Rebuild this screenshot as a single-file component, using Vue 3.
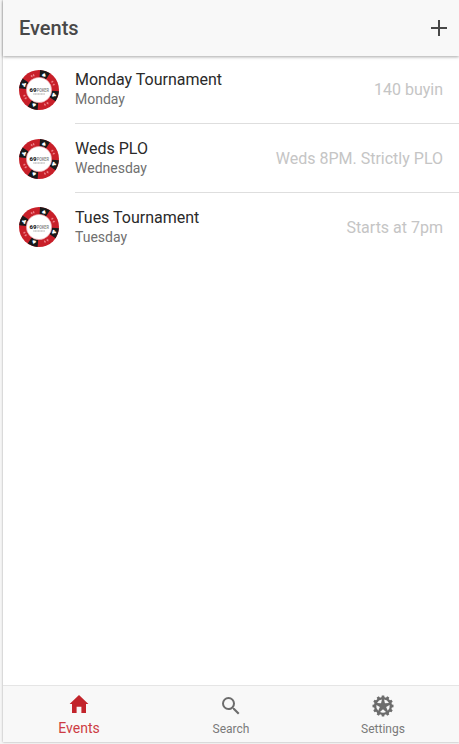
<script setup>
const events = [
  { name: 'Monday Tournament', day: 'Monday', note: '140 buyin' },
  { name: 'Weds PLO', day: 'Wednesday', note: 'Weds 8PM. Strictly PLO' },
  { name: 'Tues Tournament', day: 'Tuesday', note: 'Starts at 7pm' },
]
const suits = [
  { angle: 18, glyph: '♠' },
  { angle: 109, glyph: '♣' },
  { angle: 199, glyph: '♠' },
  { angle: 290, glyph: '♣' },
]
const pips = [-28, -20, 58, 70, 147, 158, 238, 249]
const teeth = Array.from({ length: 12 }, (_, i) => i * 30)
const holes = [36, 108, 180, 252, 324]
</script>

<template>
  <div class="screen">
    <div class="page">
      <header class="toolbar">
        <h1>Events</h1>
        <svg class="add" viewBox="0 0 16 16"><path d="M8 0v16M0 8h16" /></svg>
      </header>

      <main class="list">
        <article v-for="event in events" :key="event.name" class="item">
          <svg class="chip" viewBox="0 0 40 40">
            <circle cx="20" cy="20" r="20" fill="#c81f29" />
            <g v-for="suit in suits" :key="suit.angle" :transform="`rotate(${suit.angle} 20 20)`">
              <path d="M14.8.7a20 20 0 0 1 10.4 0L23.4 7.6a13 13 0 0 0-6.8 0z" fill="#17191a" />
              <text x="20" y="6.4" class="suit">{{ suit.glyph }}</text>
            </g>
            <path
              v-for="pip in pips"
              :key="pip"
              d="M20 2.8l1 1.5-1 1.5-1-1.5z"
              fill="#ee8088"
              :transform="`rotate(${pip} 20 20)`"
            />
            <circle cx="20" cy="20" r="12.6" fill="#fff" stroke="#e9a5aa" stroke-width=".6" />
            <text x="10.5" y="21.9" class="brand" textLength="7" lengthAdjust="spacingAndGlyphs">69</text>
            <text x="17.8" y="21.8" class="brand light" textLength="12.2" lengthAdjust="spacingAndGlyphs">POKER</text>
            <path d="M14.3 24h11.5" stroke="#8e8e8e" stroke-width=".8" stroke-dasharray="1.2 .3" />
          </svg>
          <div class="content">
            <div class="label">
              <h2>{{ event.name }}</h2>
              <p>{{ event.day }}</p>
            </div>
            <span class="note">{{ event.note }}</span>
          </div>
        </article>
      </main>

      <nav class="tabs">
        <a class="tab active">
          <svg viewBox="0 0 24 24"><path d="M12 3l9.4 9H19v9h-4.6v-6.2H9.6V21H5v-9H2.6z" /></svg>
          <span>Events</span>
        </a>
        <a class="tab">
          <svg viewBox="0 0 24 24"><path d="M15.5 14h-.79l-.28-.27A6.47 6.47 0 0 0 16 9.5 6.5 6.5 0 1 0 9.5 16c1.61 0 3.09-.59 4.23-1.57l.27.28v.79l5 4.99L20.49 19zm-6 0a4.5 4.5 0 1 1 0-9 4.5 4.5 0 0 1 0 9z" /></svg>
          <span>Search</span>
        </a>
        <a class="tab">
          <svg viewBox="0 0 24 24">
            <circle cx="12" cy="12" r="9" />
            <path v-for="a in teeth" :key="a" d="M10.8 1.5h2.4l.5 3h-3.4z" :transform="`rotate(${a} 12 12)`" />
            <path
              v-for="a in holes"
              :key="a"
              class="hole"
              d="M12 8.7L9 6Q12 4.4 15 6z"
              :transform="`rotate(${a} 12 12)`"
            />
          </svg>
          <span>Settings</span>
        </a>
      </nav>
    </div>
  </div>
</template>

<style>
body {
  background: #f5f5f5;
}
</style>

<style scoped>
.screen {
  box-sizing: border-box;
  height: 744px;
  padding: 0 0 2px 3px;
  overflow: hidden;
  font-family: Roboto, sans-serif;
}
.page {
  display: flex;
  flex-direction: column;
  height: 742px;
  background: #fff;
  box-shadow: 0 0 2px rgba(0, 0, 0, 0.35);
}
.toolbar {
  position: relative;
  display: flex;
  align-items: center;
  justify-content: space-between;
  box-sizing: border-box;
  height: 56px;
  padding: 0 12px 0 16px;
  background: #f8f8f8;
  box-shadow: 0 1px 3px rgba(0, 0, 0, 0.35);
}
h1 {
  margin: 0;
  font-size: 20px;
  font-weight: 500;
  line-height: 24px;
  color: #484848;
}
.add {
  width: 16px;
  height: 16px;
  fill: none;
  stroke: #484848;
  stroke-width: 2;
}
.list {
  flex: 1;
}
.item {
  display: flex;
  align-items: center;
  height: 69px;
  padding-left: 16px;
}
.item:first-child {
  height: 68px;
}
.item:last-child {
  height: 68px;
}
.chip {
  flex: none;
  width: 40px;
  height: 40px;
  margin-right: 16px;
}
.suit {
  font: 6px 'DejaVu Sans', sans-serif;
  text-anchor: middle;
  fill: #fff;
}
.brand {
  font: 900 5px Roboto, sans-serif;
  fill: #222;
}
.light {
  font-weight: 500;
  fill: #777;
}
.content {
  display: flex;
  flex: 1;
  align-items: center;
  justify-content: space-between;
  box-sizing: border-box;
  height: 100%;
  padding-right: 16px;
  border-bottom: 1px solid #dedede;
}
.item:last-child .content {
  padding-top: 1px;
  border-bottom: 0;
}
h2 {
  margin: 0;
  font-size: 16px;
  font-weight: 400;
  line-height: 20px;
  color: #2a2a2a;
}
p {
  margin: 0;
  font-size: 14px;
  line-height: 19px;
  color: #707070;
}
.note {
  font-size: 16px;
  line-height: 21px;
  color: #c5c5c5;
}
.tabs {
  display: grid;
  grid-template-columns: repeat(3, 1fr);
  box-sizing: border-box;
  height: 57px;
  background: #f8f8f8;
  border-top: 1px solid #e5e5e5;
}
.tab {
  display: flex;
  flex-direction: column;
  align-items: center;
  padding-top: 8px;
  font-size: 12px;
  line-height: 16px;
  color: #7a7a7a;
}
.tab svg {
  width: 24px;
  height: 24px;
  margin-bottom: 3px;
  fill: #6c6c6c;
}
.tab .hole {
  fill: #f8f8f8;
}
.active {
  padding-top: 6px;
  font-size: 14px;
  color: #cd3c43;
}
.tab.active svg {
  margin-bottom: 4px;
  fill: #c2242b;
}
</style>
